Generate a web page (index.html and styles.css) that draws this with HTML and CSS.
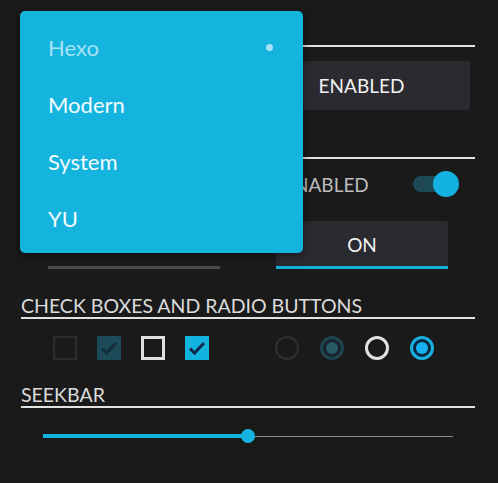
FILE: index.html
```html
<!DOCTYPE html>
<html lang="en">
<head>
    <meta charset="UTF-8">
    <meta name="viewport" content="width=device-width, initial-scale=1.0">
    <title>Widgets</title>
    <link rel="stylesheet" href="styles.css">
</head>
<body>
    <div class="page">
        <!-- Botões -->
        <h3 class="section-title title-first">BUTTONS</h3>
        <div class="row row-buttons">
            <button class="btn" disabled>DISABLED</button>
            <button class="btn">ENABLED</button>
        </div>

        <!-- Switches e toggles -->
        <h3 class="section-title title-switch">SWITCHES AND TOGGLES</h3>
        <div class="row row-switch">
            <div class="switch-cell">
                <span class="switch-label">DISABLED</span>
                <span class="switch off"><span class="thumb"></span></span>
            </div>
            <div class="switch-cell">
                <span class="switch-label">ENABLED</span>
                <span class="switch on"><span class="thumb"></span></span>
            </div>
        </div>
        <div class="row row-toggle">
            <button class="toggle">OFF</button>
            <button class="toggle checked">ON</button>
        </div>

        <!-- Check boxes e radio buttons -->
        <h3 class="section-title title-check">CHECK BOXES AND RADIO BUTTONS</h3>
        <div class="row row-check">
            <div class="group">
                <span class="check disabled"></span>
                <span class="check disabled checked">
                    <svg viewBox="0 0 24 24"><path d="M5 12.5l4.5 4.5 9.5-10"/></svg>
                </span>
                <span class="check"></span>
                <span class="check checked">
                    <svg viewBox="0 0 24 24"><path d="M5 12.5l4.5 4.5 9.5-10"/></svg>
                </span>
            </div>
            <div class="group">
                <span class="radio disabled"></span>
                <span class="radio disabled checked"><span class="dot"></span></span>
                <span class="radio"></span>
                <span class="radio checked"><span class="dot"></span></span>
            </div>
        </div>

        <!-- Seekbar -->
        <h3 class="section-title title-seek">SEEKBAR</h3>
        <div class="seekbar">
            <div class="seek-fill" style="width: 50%;"></div>
            <span class="seek-thumb"></span>
            <div class="seek-rest"></div>
        </div>
    </div>

    <!-- Menu de temas aberto -->
    <ul class="menu">
        <li class="menu-item selected">Hexo <span class="menu-dot"></span></li>
        <li class="menu-item">Modern</li>
        <li class="menu-item">System</li>
        <li class="menu-item">YU</li>
    </ul>
</body>
</html>
```

FILE: styles.css
```css
body {
    font-family: Lato, "Open Sans", sans-serif;
    background-color: #1b1a1b;
    color: #dcdcdc;
    margin: 0;
    padding: 0;
}
.page {
    width: 454px;
    padding: 0 23px 0 21px;
}
/* Títulos das seções */
.section-title {
    margin: 22px 0 0;
    font-size: 19.5px;
    font-weight: normal;
    line-height: 22px;
    color: #dcdcdc;
    border-bottom: 2px solid #e2e2e2;
    height: 22px;
}
.title-first {
    margin-top: 23px;
}
.title-switch {
    margin-top: 25px;
}
.title-check {
    margin-top: 26px;
}
.title-seek {
    margin-top: 24px;
}
.row {
    display: grid;
    grid-template-columns: 227px 1fr;
    padding-left: 27px;
}
.row-buttons {
    margin-top: 14px;
    grid-template-columns: 205px 1fr;
}
.btn {
    width: 217px;
    height: 49px;
    background-color: #2b2a30;
    color: #f2f2f2;
    border: none;
    border-radius: 3px;
    font-family: inherit;
    font-size: 19px;
}
.btn:disabled {
    width: 195px;
    color: #666;
}
/* Switches */
.row-switch {
    margin-top: 12px;
    height: 26px;
}
.switch-cell {
    box-sizing: border-box;
    display: flex;
    align-items: center;
    justify-content: space-between;
    width: 172px;
    padding-left: 8px;
}
.switch-label {
    font-size: 19px;
    color: #bdbdbd;
}
.switch {
    position: relative;
    width: 34px;
    height: 16px;
    border-radius: 8px;
    background-color: #1e4a58;
}
.switch .thumb {
    position: absolute;
    top: -5px;
    right: -12px;
    width: 26px;
    height: 26px;
    border-radius: 50%;
    background-color: #14b3df;
}
.switch.off {
    background-color: #333;
}
.switch.off .thumb {
    right: auto;
    left: -6px;
    background-color: #555;
}
/* Toggle buttons */
.row-toggle {
    margin-top: 24px;
}
.toggle {
    width: 172px;
    height: 48px;
    background-color: transparent;
    color: #777;
    border: none;
    border-bottom: 3px solid #4a4a4c;
    font-family: inherit;
    font-size: 19px;
    padding-top: 3px;
}
.toggle.checked {
    margin-left: 1px;
    background-color: #2b2a30;
    color: #f2f2f2;
    border-bottom-color: #13aed8;
    border-radius: 3px 3px 0 0;
}
/* Check boxes e radios */
.row-check {
    margin-top: 17px;
}
.group {
    display: flex;
    gap: 20px;
    height: 24px;
}
.row-check .group:first-child {
    padding-left: 5px;
}
.check {
    box-sizing: border-box;
    width: 24px;
    height: 24px;
    border: 3px solid #e0e0e0;
}
.check.disabled {
    border: 2px solid #2e2e30;
}
.check.checked {
    border: none;
    background-color: #14b3df;
}
.check.disabled.checked {
    background-color: #1c4a58;
}
.check svg {
    width: 24px;
    height: 24px;
    display: block;
    fill: none;
    stroke: #10284a;
    stroke-width: 3;
}
.check.disabled svg {
    stroke: #142e3a;
}
.group:last-child {
    gap: 21px;
}
.radio {
    box-sizing: border-box;
    width: 24px;
    height: 24px;
    border-radius: 50%;
    border: 3px solid #e0e0e0;
    display: flex;
    align-items: center;
    justify-content: center;
}
.radio.disabled {
    border: 2px solid #303032;
}
.radio.checked {
    border: 3px solid #19b0df;
    background-color: #0d2740;
}
.radio.disabled.checked {
    border-color: #21434f;
    background-color: #18262c;
}
.radio .dot {
    width: 12px;
    height: 12px;
    border-radius: 50%;
    background-color: #14b3ef;
}
.radio.disabled .dot {
    background-color: #265a64;
}
/* Seekbar */
.seekbar {
    display: flex;
    align-items: center;
    margin: 21px 0 0 22px;
    width: 410px;
    height: 14px;
}
.seek-fill {
    height: 4px;
    background-color: #14b3df;
}
.seek-thumb {
    flex: none;
    width: 14px;
    height: 14px;
    margin: 0 -7px;
    border-radius: 50%;
    background-color: #14b3df;
    position: relative;
}
.seek-rest {
    flex: 1;
    height: 1px;
    background-color: #8a8a8a;
}
/* Menu suspenso */
.menu {
    position: absolute;
    left: 20px;
    top: 11px;
    width: 283px;
    margin: 0;
    padding: 8px 0 6px;
    list-style: none;
    background-color: #14b4df;
    border-radius: 5px;
    box-shadow: 0 2px 8px rgba(0, 0, 0, 0.5);
}
.menu-item {
    display: flex;
    align-items: center;
    justify-content: space-between;
    height: 57px;
    padding: 0 28px;
    font-size: 22px;
    color: #f4fbfe;
}
.menu-item.selected {
    color: #a6e2f4;
}
.menu-dot {
    width: 7px;
    height: 7px;
    border-radius: 50%;
    background-color: #a6e2f4;
    margin-right: 2px;
}
```
